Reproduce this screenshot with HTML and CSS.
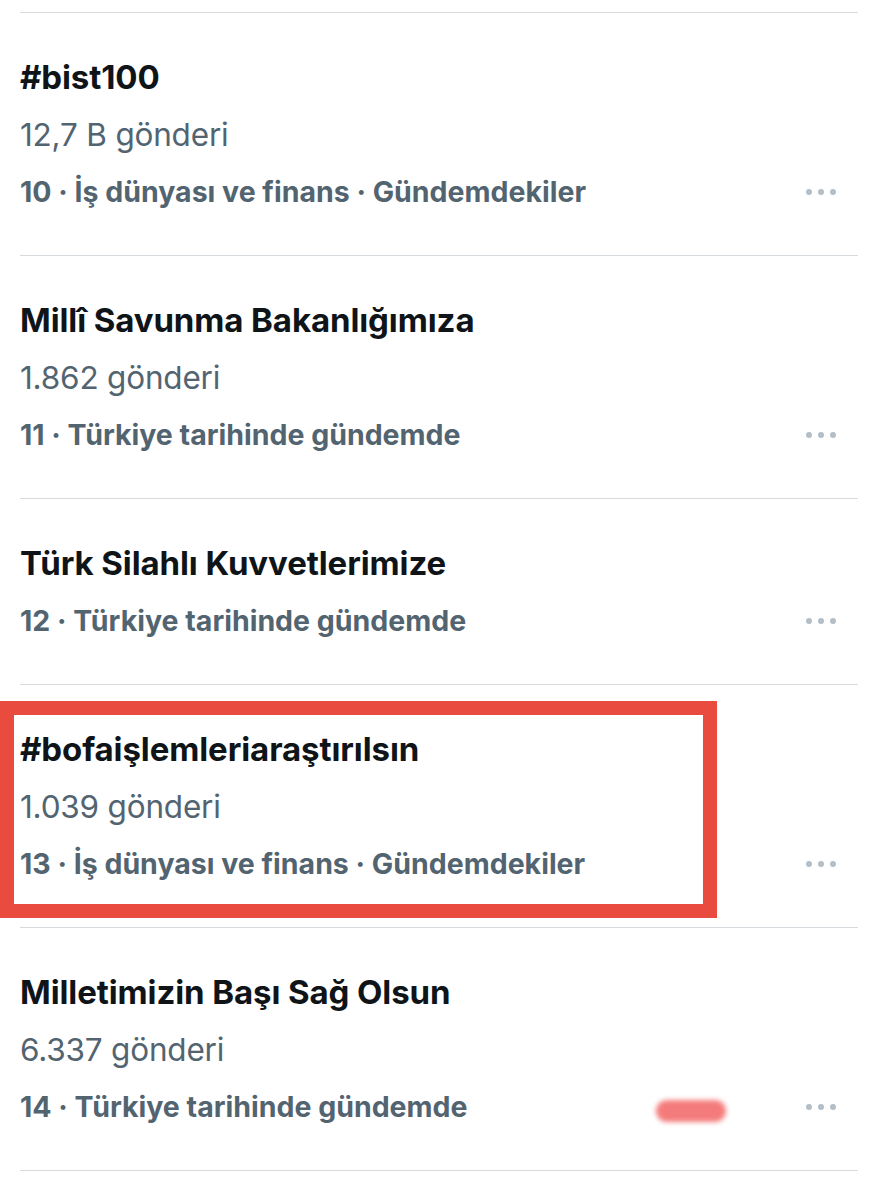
FILE: index.html
```html
<!DOCTYPE html>
<html lang="tr">
<head>
<meta charset="utf-8">
<link rel="stylesheet" href="styles.css">
</head>
<body>
<div class="list">
  <div class="divider"></div>
  <div class="trend">
    <div class="title">#bist100</div>
    <div class="count">12,7 B gönderi</div>
    <div class="meta"><span>10 · İş dünyası ve finans · Gündemdekiler</span><span class="dots"><i></i><i></i><i></i></span></div>
  </div>
  <div class="divider"></div>
  <div class="trend">
    <div class="title">Millî Savunma Bakanlığımıza</div>
    <div class="count">1.862 gönderi</div>
    <div class="meta"><span>11 · Türkiye tarihinde gündemde</span><span class="dots"><i></i><i></i><i></i></span></div>
  </div>
  <div class="divider"></div>
  <div class="trend short">
    <div class="title">Türk Silahlı Kuvvetlerimize</div>
    <div class="meta"><span>12 · Türkiye tarihinde gündemde</span><span class="dots"><i></i><i></i><i></i></span></div>
  </div>
  <div class="divider"></div>
  <div class="trend">
    <div class="highlight"></div>
    <div class="title">#bofaişlemleriaraştırılsın</div>
    <div class="count">1.039 gönderi</div>
    <div class="meta"><span>13 · İş dünyası ve finans · Gündemdekiler</span><span class="dots"><i></i><i></i><i></i></span></div>
  </div>
  <div class="divider"></div>
  <div class="trend">
    <div class="title">Milletimizin Başı Sağ Olsun</div>
    <div class="count">6.337 gönderi</div>
    <div class="meta"><span>14 · Türkiye tarihinde gündemde</span><span class="smudge"></span><span class="dots"><i></i><i></i><i></i></span></div>
  </div>
  <div class="divider"></div>
</div>
</body>
</html>
```
FILE: styles.css
```css
html, body {
  margin: 0;
  padding: 0;
  background: #ffffff;
}
body {
  font-family: Inter, "Noto Sans", "Liberation Sans", sans-serif;
}
.list {
  padding: 12px 21px 0 20px;
}
.divider {
  height: 1px;
  background: #d4dade;
}
.trend {
  position: relative;
  padding: 36px 0 35px 0;
}
.trend > div {
  line-height: 57px;
  height: 57px;
  white-space: nowrap;
}
.title {
  font-size: 33px;
  font-weight: 700;
  color: #0f1419;
  letter-spacing: -0.1px;
  position: relative;
}
.count {
  font-size: 31.5px;
  font-weight: 400;
  color: #536471;
  letter-spacing: -0.2px;
}
.meta {
  font-size: 28.5px;
  font-weight: 700;
  color: #536471;
  letter-spacing: 0;
  display: flex;
  align-items: center;
  position: relative;
}
.meta > span:first-child {
  flex: 1;
}
.dots {
  display: flex;
  gap: 6px;
  margin-right: 22px;
  align-items: center;
}
.dots i {
  display: block;
  width: 6px;
  height: 6px;
  border-radius: 50%;
  background: #b3bec6;
}
.smudge {
  position: absolute;
  left: 636px;
  top: 22px;
  width: 70px;
  height: 22px;
  border-radius: 12px;
  background: #f25b5b;
  filter: blur(2.5px);
  opacity: 0.8;
}
.highlight {
  position: absolute;
  left: -20px;
  top: 16px;
  width: 689px;
  border: 14px solid #e94b3f;
  height: 189px !important;
  line-height: normal !important;
}
```
